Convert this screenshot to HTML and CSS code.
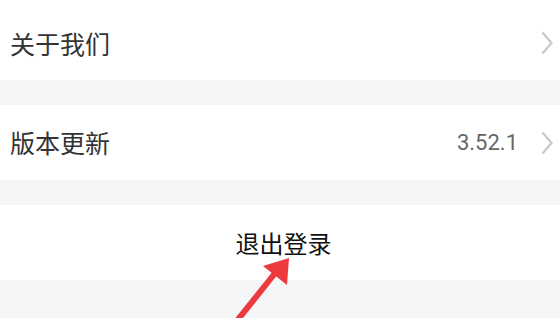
FILE: index.html
```html
<!DOCTYPE html>
<html lang="zh">
<head>
<meta charset="utf-8">
<link rel="stylesheet" href="styles.css">
</head>
<body>
<div class="page">
  <div class="row row-first">
    <span class="label">关于我们</span>
    <svg class="chev" viewBox="0 0 12 24" width="12" height="24"><path d="M1.5 1.5 L10.5 12 L1.5 22.5" fill="none" stroke="#c8c8c8" stroke-width="2.2"/></svg>
  </div>
  <div class="gap"></div>
  <div class="row">
    <span class="label">版本更新</span>
    <span class="right">
      <span class="value">3.52.1</span>
      <svg class="chev" viewBox="0 0 12 24" width="12" height="24"><path d="M1.5 1.5 L10.5 12 L1.5 22.5" fill="none" stroke="#c8c8c8" stroke-width="2.2"/></svg>
    </span>
  </div>
  <div class="gap"></div>
  <div class="row row-center">
    <span class="logout">退出登录</span>
  </div>
  <div class="bottom"></div>
  <svg class="arrow" viewBox="0 0 560 318" width="560" height="318">
    <line x1="236" y1="322" x2="276" y2="272" stroke="#ec3a3f" stroke-width="6"/>
    <polygon points="289,258 263,266 287,285" fill="#ec3a3f"/>
  </svg>
</div>
</body>
</html>
```

FILE: styles.css
```css
html, body {
  margin: 0;
  padding: 0;
  background: #f5f6f8;
}
.page {
  position: relative;
  width: 560px;
  height: 318px;
  overflow: hidden;
  font-family: "Noto Sans CJK SC", "Noto Sans", sans-serif;
}
.row {
  height: 75px;
  background: #ffffff;
  display: flex;
  align-items: center;
  justify-content: space-between;
  padding: 0 7px 0 10px;
  box-sizing: border-box;
}
.row-first {
  height: 80px;
  padding-top: 6px;
}
.gap {
  height: 25px;
}
.label {
  font-size: 25px;
  color: #333333;
  line-height: 1;
}
.right {
  display: flex;
  align-items: center;
  gap: 23px;
}
.value {
  font-family: Roboto, "Liberation Sans", sans-serif;
  font-size: 22px;
  color: #666666;
}
.chev {
  display: block;
}
.row-center {
  justify-content: center;
  padding: 0 0 0 7px;
}
.logout {
  font-size: 24px;
  color: #111111;
  line-height: 1;
}
.bottom {
  height: 38px;
}
.arrow {
  position: absolute;
  left: 0;
  top: 0;
}
```
